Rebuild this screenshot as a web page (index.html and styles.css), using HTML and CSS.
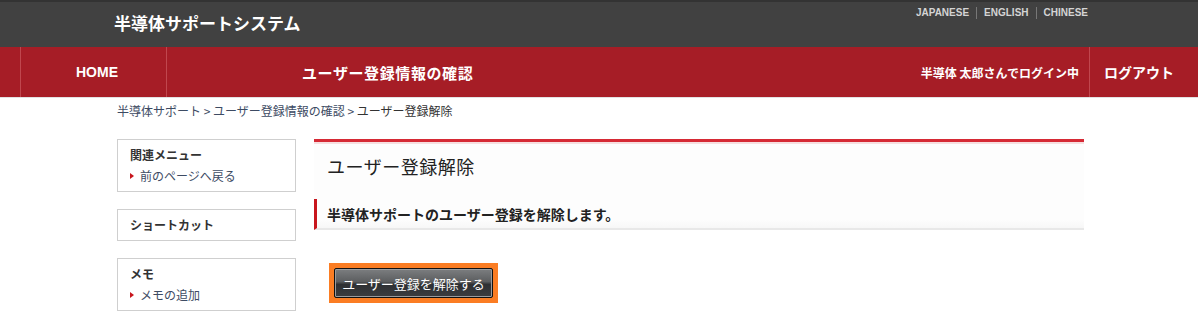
FILE: index.html
```html
<!DOCTYPE html>
<html lang="ja">
<head>
<meta charset="utf-8">
<title>ユーザー登録解除</title>
<link rel="stylesheet" href="styles.css">
</head>
<body>
<header class="top">
  <div class="top-inner">
    <div class="logo">半導体サポートシステム</div>
    <ul class="langs">
      <li>JAPANESE</li>
      <li>ENGLISH</li>
      <li>CHINESE</li>
    </ul>
  </div>
</header>
<nav class="nav">
  <a class="nav-home">HOME</a>
  <a class="nav-confirm">ユーザー登録情報の確認</a>
  <span class="nav-spacer"></span>
  <span class="nav-user">半導体 太郎さんでログイン中</span>
  <a class="nav-logout">ログアウト</a>
</nav>
<div class="container">
  <div class="crumbs">半導体サポート &gt; ユーザー登録情報の確認 &gt; <span class="cur">ユーザー登録解除</span></div>
  <div class="layout">
    <aside class="side">
      <div class="box">
        <div class="box-title">関連メニュー</div>
        <div class="box-link">前のページへ戻る</div>
      </div>
      <div class="box">
        <div class="box-title">ショートカット</div>
      </div>
      <div class="box">
        <div class="box-title">メモ</div>
        <div class="box-link">メモの追加</div>
      </div>
    </aside>
    <main class="main">
      <div class="panel">
        <h1 class="title">ユーザー登録解除</h1>
        <h2 class="sub">半導体サポートのユーザー登録を解除します。</h2>
      </div>
      <div class="actions">
        <span class="btn-wrap"><button class="btn">ユーザー登録を解除する</button></span>
      </div>
    </main>
  </div>
</div>
</body>
</html>
```
FILE: styles.css
```css
* { box-sizing: border-box; }
html, body { margin: 0; padding: 0; background: #fff; }
body {
  font-family: "Noto Sans CJK JP", "Liberation Sans", sans-serif;
  color: #333;
  overflow: hidden;
}
.top {
  height: 47px;
  background: #414141;
  border-top: 2px solid #333;
}
.top-inner {
  width: 970px;
  margin: 0 auto;
  display: flex;
  justify-content: space-between;
  align-items: flex-start;
}
.logo {
  color: #fff;
  font-weight: bold;
  font-size: 17px;
  line-height: 20px;
  margin-top: 11px;
}
.langs {
  list-style: none;
  margin: 5px -4px 0 0;
  padding: 0;
  display: flex;
  font-family: "Liberation Sans", Arial, sans-serif;
  font-weight: bold;
  font-size: 10px;
  line-height: 12px;
  color: #d4d4d4;
}
.langs li { padding: 0 7px; border-left: 1px solid #777; }
.langs li:first-child { border-left: none; }
.langs li:last-child { padding-right: 0; }
.nav {
  height: 51px;
  background: #a61d26;
  border-bottom: 1px solid #e2e2e2;
  display: flex;
  align-items: stretch;
  padding-left: 20px;
  color: #fff;
  font-weight: bold;
}
.nav a, .nav span { display: flex; align-items: center; }
.nav-home {
  width: 147px;
  border-left: 1px solid #c0474e;
  border-right: 1px solid #c0474e;
  padding-left: 55px;
  font-family: "Liberation Sans", Arial, sans-serif;
  font-size: 14px;
}
.nav-confirm { padding-left: 135px; font-size: 15px; letter-spacing: 0.6px; }
.nav-spacer { flex: 1; }
.nav-user { font-size: 12px; padding-right: 10px; }
.nav-logout {
  border-left: 1px solid #c0474e;
  padding: 0 24px 0 14px;
  font-size: 14px;
}
.container { width: 970px; margin: 0 auto; padding-left: 3px; }
.crumbs {
  font-size: 12px;
  line-height: 16px;
  margin-top: 5px;
  color: #3d4b63;
}
.crumbs .cur { color: #333; }
.layout {
  display: flex;
  gap: 18px;
  margin-top: 20px;
  align-items: flex-start;
}
.side { width: 179px; display: flex; flex-direction: column; gap: 17px; }
.box {
  border: 1px solid #cfcfcf;
  padding: 6px 12px;
  font-size: 12px;
}
.box-title { font-weight: bold; line-height: 18px; color: #333; }
.box-link {
  line-height: 18px;
  margin-top: 3px;
  padding-left: 10px;
  position: relative;
  color: #3d4b63;
}
.box-link::before {
  content: "";
  position: absolute;
  left: 0;
  top: 6px;
  border-left: 4px solid #c8161d;
  border-top: 3px solid transparent;
  border-bottom: 3px solid transparent;
}
.main { width: 770px; }
.panel {
  border-top: 3px solid #d62a35;
  background: #fdfdfd;
  box-shadow: inset 0 2px 0 #f6dfe0;
}
.title {
  margin: 0;
  font-weight: normal;
  font-size: 18px;
  letter-spacing: 0.5px;
  line-height: 24px;
  padding: 12px 13px 21px;
  color: #222;
}
.sub {
  margin: 0;
  font-size: 14px;
  line-height: 18px;
  padding: 6px 13px 5px 10px;
  border-left: 3px solid #c8161d;
  border-bottom: 2px solid #e8e8e8;
  background: linear-gradient(#fdfdfd 70%, #f7f7f7);
  color: #222;
}
.actions { padding: 33px 0 0 15px; }
.btn-wrap {
  display: inline-block;
  background: #fb7d23;
  padding: 5px;
}
.btn {
  display: block;
  width: 159px;
  height: 30px;
  border: 1px solid #111;
  border-radius: 2px;
  background: linear-gradient(#7c7e80 0%, #5c5e60 45%, #2e3033 55%, #3b3d40 100%);
  box-shadow: inset 0 0 0 1px #9a9c9e;
  color: #fff;
  font-family: "Noto Sans CJK JP", sans-serif;
  font-size: 13px;
  padding: 0;
}
```
